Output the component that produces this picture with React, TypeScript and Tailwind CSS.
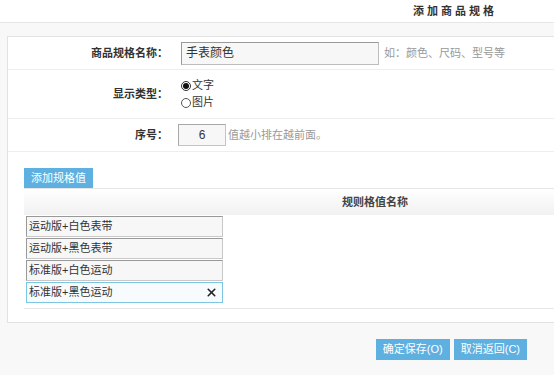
import React from 'react';
import { X } from 'lucide-react';

const font = "font-['Liberation_Sans','Noto_Sans_CJK_SC',sans-serif]";

const specValues = ['运动版+白色表带', '运动版+黑色表带', '标准版+白色运动', '标准版+黑色运动'];

export default function App() {
  return (
    <div className={`w-[554px] h-[375px] overflow-hidden bg-[#f8f8f8] text-[#333] ${font}`}>
      {/* header */}
      <div className="h-[23px] bg-white border-b border-[#e6e6e6] flex items-center pl-[413px]">
        <span className="text-[11px] font-bold tracking-[3px] text-[#333]">添加商品规格</span>
      </div>

      {/* panel */}
      <div className="mt-[13px] ml-[7px] w-[560px] h-[287px] bg-white border border-[#e2e2e2]">
        {/* row 1 */}
        <div className="h-[33px] flex items-center border-b border-[#eeeeee]">
          <div className="w-[160px] text-right text-[11px] font-bold">商品规格名称：</div>
          <div className="ml-[13px] w-[198px] h-[23px] bg-[#f7f7f7] border border-[#bdbdbd] border-t-[#999] border-l-[#999] flex items-center pl-[4px] text-[12px]">
            手表颜色
          </div>
          <span className="ml-[5px] text-[11px] text-[#999]">如：颜色、尺码、型号等</span>
        </div>

        {/* row 2 */}
        <div className="h-[49px] flex items-center border-b border-[#eeeeee]">
          <div className="w-[160px] text-right text-[11px] font-bold">显示类型：</div>
          <div className="ml-[13px] flex flex-col text-[11px] leading-[17px]">
            <label className="flex items-center">
              <span className="w-[10px] h-[10px] rounded-full border border-[#333] flex items-center justify-center">
                <span className="w-[6px] h-[6px] rounded-full bg-[#111]" />
              </span>
              <span className="ml-px">文字</span>
            </label>
            <label className="flex items-center">
              <span className="w-[10px] h-[10px] rounded-full border border-[#555]" />
              <span className="ml-px">图片</span>
            </label>
          </div>
        </div>

        {/* row 3 */}
        <div className="h-[33px] flex items-center border-b border-[#eeeeee]">
          <div className="w-[160px] text-right text-[11px] font-bold">序号：</div>
          <div className="ml-[10px] w-[48px] h-[22px] bg-[#f7f7f7] border border-[#c4c4c4] border-t-[#a8a8a8] border-l-[#a8a8a8] flex items-center justify-center text-[12px]">
            6
          </div>
          <span className="ml-[2px] text-[11px] text-[#999]">值越小排在越前面。</span>
        </div>

        {/* spec values */}
        <div className="pl-[16px] pt-[16px]">
          <div className="flex w-fit items-center h-[20px] px-[7px] bg-[#5eb0e0] text-white text-[11px]">添加规格值</div>
          <div className="border-b border-[#e8e8e8] pb-[5px]">
            <div className="h-[27px] bg-gradient-to-b from-white to-[#f1f1f1] border-t border-[#e6e6e6] flex items-center pl-[318px] text-[11px] font-bold text-[#444]">
              规则格值名称
            </div>
            <div className="pl-[2px] pt-px flex flex-col gap-px">
              {specValues.map((v, i) => {
                const active = i === specValues.length - 1;
                return (
                  <div
                    key={v}
                    className={
                      active
                        ? 'w-[197px] h-[21px] bg-[#f8fbfe] border border-[#7cc6e4] flex items-center justify-between pl-[2px] pr-[4px] text-[11px]'
                        : 'w-[197px] h-[21px] bg-[#f7f7f7] border border-[#c8c8c8] border-t-[#999] border-l-[#999] flex items-center pl-[2px] text-[11px]'
                    }
                  >
                    <span>{v}</span>
                    {active && <X size={13} strokeWidth={3} className="text-[#222]" />}
                  </div>
                );
              })}
            </div>
          </div>
        </div>
      </div>

      {/* footer buttons */}
      <div className="mt-[16px] flex justify-end gap-[4px] pr-[27px]">
        <div className="h-[21px] px-[7px] bg-[#5eb0e0] text-white text-[11px] flex items-center">确定保存(O)</div>
        <div className="h-[21px] px-[7px] bg-[#5eb0e0] text-white text-[11px] flex items-center">取消返回(C)</div>
      </div>
    </div>
  );
}
